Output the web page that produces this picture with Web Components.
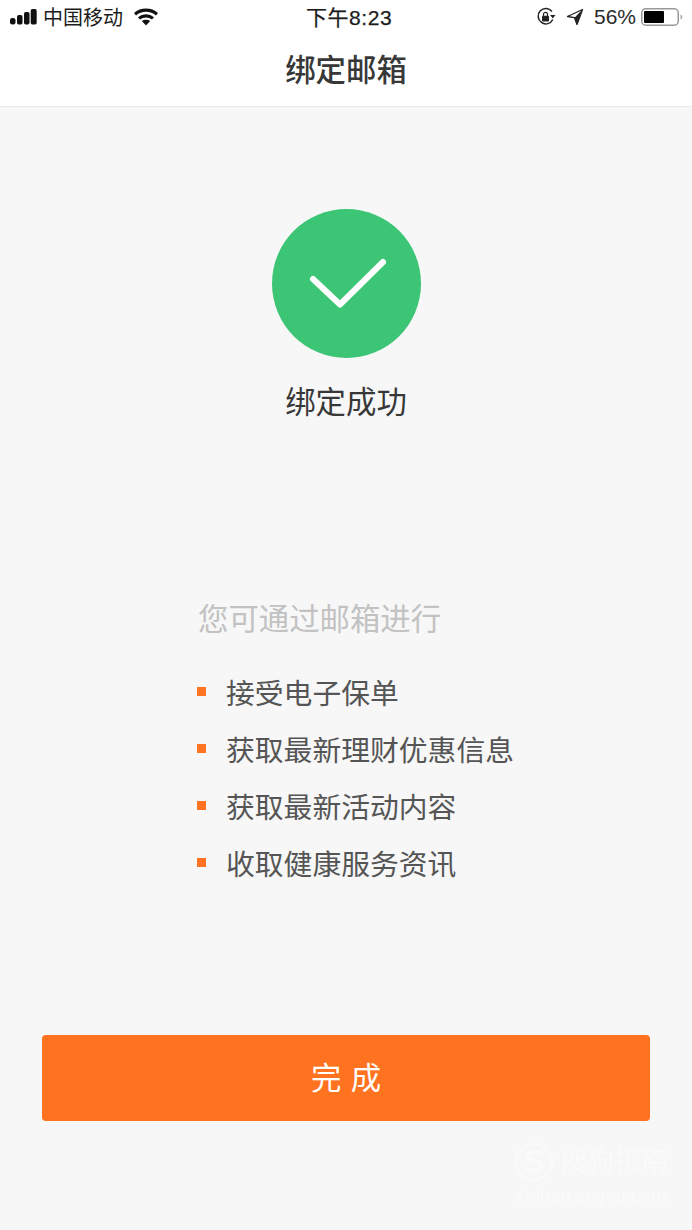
<!DOCTYPE html>
<html lang="zh"><head><meta charset="utf-8">
<style>
html,body{margin:0;padding:0;background:#f7f7f7}
body{width:692px;height:1230px;overflow:hidden;font-family:"Liberation Sans","Noto Sans CJK SC",sans-serif}
</style></head><body>
<app-screen></app-screen>
<template id="t-status"><style>
:host{display:flex;height:36px;background:#fff;color:#1c1c1c;position:relative;align-items:center;justify-content:space-between;padding:0 9px 3px 10px;box-sizing:border-box;font-size:20px}
.l,.r{display:flex;align-items:center}
.c{position:absolute;left:306px;top:5px;font-size:21px;line-height:25px;letter-spacing:.55px;white-space:nowrap;-webkit-text-stroke:.25px #1c1c1c}
svg{display:block}
</style>
<div class="l">
<svg width="27" height="16" viewBox="0 0 27 16"><g fill="#111"><rect x="0" y="9" width="5.500" height="6.500" rx="2.200"/><rect x="7" y="6" width="5.500" height="9.500" rx="1.700"/><rect x="14" y="3" width="5.500" height="12.500" rx="1.700"/><rect x="20.700" y="0" width="6" height="15.500" rx="1.700"/></g></svg>
<span style="margin-left:6px;width:80px;white-space:nowrap">中国移动</span>
<svg style="margin-left:11px" width="24" height="18" viewBox="0 0 24 18"><path d="M1 6.200C7.200.8 16.800.8 23 6.200" fill="none" stroke="#111" stroke-width="3.200"/><path d="M5 10.400c4-3.400 10-3.400 14 0" fill="none" stroke="#111" stroke-width="3.200"/><path d="M7.800 13c2.500-1.800 5.900-1.800 8.400 0L12 17.500z" fill="#111"/></svg>
</div>
<div class="c">下午8:23</div>
<div class="r">
<svg width="20" height="20" viewBox="0 0 20 20"><path d="M16.800 12.500A7.700 7.700 0 1 1 16 4.500" fill="none" stroke="#222" stroke-width="1.500"/><path d="M14 8h5.500l-2.700 3.500z" fill="#222"/><rect x="6" y="8.800" width="7" height="5.700" rx="1" fill="#222"/><path d="M7.500 9V7.300a2 2 0 0 1 4 0V9" fill="none" stroke="#222" stroke-width="1.200"/></svg>
<svg style="margin-left:10px" width="18" height="18" viewBox="0 0 18 18"><path d="M16.500 1.500 1.500 8.500l7 1.200L11 16.500z" fill="none" stroke="#222" stroke-width="1.300" stroke-linejoin="round"/><path d="M16.500 1.500 8.500 9.700l2.500 6.800z" fill="#222"/></svg>
<span style="margin-left:10px;font-size:21px;color:#2a2a2a">56%</span>
<svg style="margin-left:5px" width="42" height="18" viewBox="0 0 42 18"><rect x=".75" y=".75" width="36.500" height="16.500" rx="4" fill="none" stroke="#999" stroke-width="1.500"/><rect x="3" y="3" width="20" height="12" rx="1" fill="#000"/><path d="M39.500 6.500c1.300.4 1.800 1.200 1.800 2.500s-.5 2.100-1.800 2.500z" fill="#aaa"/></svg>
</div>
</template>
<template id="t-nav"><style>
:host{display:flex;height:71px;background:#fff;border-bottom:1px solid #eaeaea;box-sizing:border-box;align-items:center;justify-content:center;padding-bottom:7px;font-size:30.400px;font-weight:500;color:#383838}
</style><slot></slot></template>
<template id="t-result"><style>
:host{display:flex;flex-direction:column;align-items:center;padding-top:102px}
svg{display:block}
p{margin:26px 0 0;font-size:30.400px;line-height:36px;color:#383838;font-weight:400}
</style>
<svg width="149" height="149" viewBox="0 0 149 149"><circle cx="74.500" cy="74.500" r="74.500" fill="#3bc574"/><path d="M41 70 68 95.500 111 53" fill="none" stroke="#fff" stroke-width="6" stroke-linecap="round" stroke-linejoin="round"/></svg>
<p><slot></slot></p></template>
<template id="t-list"><style>
:host{display:block;margin-top:181px;padding-left:198px}
h2{margin:0 0 37px;font-weight:400;font-size:30.400px;line-height:36px;color:#c2c2c2}
.items{display:flex;flex-direction:column;gap:23px}
</style><h2><slot name="head"></slot></h2><div class="items"><slot></slot></div></template>
<template id="t-item"><style>
:host{display:flex;align-items:center;height:34px;font-size:28.800px;color:#555;white-space:nowrap}
i{width:9px;height:9px;background:#ff7322;margin:1px 20px 0 -1px;flex:none}
</style><i></i><slot></slot></template>
<template id="t-btn"><style>
:host{display:flex;margin:156px 42px 0;height:86px;background:#ff7220;border-radius:4px;align-items:center;justify-content:center;color:#fff;font-size:30.400px;padding-bottom:4px;box-sizing:border-box}
span{word-spacing:1px}
</style><span><slot></slot></span></template>
<template id="t-wm"><style>
:host{position:absolute;left:514px;top:1141px;width:156px;height:70px;color:#fff;opacity:.45;display:block}
svg{position:absolute;left:0;top:1px}
.a{position:absolute;left:46px;top:3px;font-size:27px;line-height:36px;white-space:nowrap}
.b{position:absolute;left:2px;top:44px;font-size:18.500px;line-height:22px;white-space:nowrap}
</style>
<svg width="40" height="40" viewBox="0 0 40 40"><circle cx="20" cy="20" r="18" fill="none" stroke="#fff" stroke-width="2.500"/><path d="M29 12c-7-2.500-16-2-16 3s14 3.500 14 9-11 5-17 3" fill="none" stroke="#fff" stroke-width="4.500"/></svg>
<div class="a">搜狗指南</div><div class="b">zhinan.sogou.com</div></template>
<template id="t-screen"><style>
:host{display:block;width:692px;height:1230px;position:relative;background:#f7f7f7;overflow:hidden}
</style>
<status-bar></status-bar>
<nav-bar>绑定邮箱</nav-bar>
<result-hero>绑定成功</result-hero>
<benefit-list><span slot="head">您可通过邮箱进行</span>
<benefit-item>接受电子保单</benefit-item>
<benefit-item>获取最新理财优惠信息</benefit-item>
<benefit-item>获取最新活动内容</benefit-item>
<benefit-item>收取健康服务资讯</benefit-item>
</benefit-list>
<done-button>完 成</done-button>
<water-mark></water-mark>
</template>
<script>
const reg=(n,t)=>customElements.define(n,class extends HTMLElement{constructor(){super();this.attachShadow({mode:"open"}).appendChild(document.getElementById(t).content.cloneNode(true))}});
reg("status-bar","t-status");reg("nav-bar","t-nav");reg("result-hero","t-result");reg("benefit-list","t-list");reg("benefit-item","t-item");reg("done-button","t-btn");reg("water-mark","t-wm");reg("app-screen","t-screen");
</script>
</body></html>
